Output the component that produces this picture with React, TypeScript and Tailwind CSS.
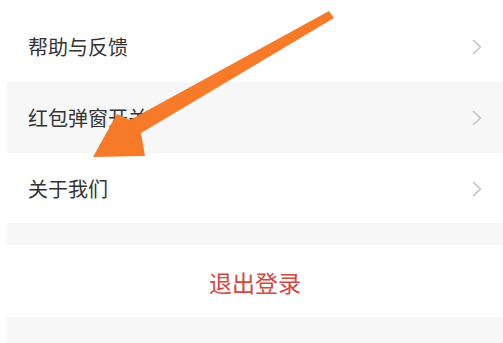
const font = { fontFamily: '"Noto Sans CJK SC", "Noto Sans", sans-serif' };

function Chevron() {
  return (
    <svg width="10" height="16" viewBox="0 0 10 16" fill="none">
      <polyline points="1.5,1.5 8.5,8 1.5,14.5" stroke="#c2c2c2" strokeWidth="1.6" strokeLinecap="round" strokeLinejoin="round" />
    </svg>
  );
}

function Row({ label, gray, className }: { label: string; gray?: boolean; className: string }) {
  return (
    <div className={`flex items-center justify-between pl-[21px] pr-[21px] ${gray ? 'bg-[#f7f7f7]' : 'bg-white'} ${className}`}>
      <span className="text-[20px] leading-none text-[#333333]">{label}</span>
      <Chevron />
    </div>
  );
}

export default function App() {
  return (
    <div className="relative h-[343px] w-[503px] overflow-hidden bg-white pl-[7px]" style={font}>
      <div className="flex flex-col">
        <Row label="帮助与反馈" className="h-[82px] pt-[12px]" />
        <Row label="红包弹窗开关" gray className="h-[71px]" />
        <Row label="关于我们" className="h-[70px] pt-[2px]" />
        <div className="h-[22px] bg-[#f7f7f7]" />
        <div className="flex h-[72px] items-center justify-center bg-white pt-[2px]">
          <span className="text-[23px] leading-none text-[#d8453b]">退出登录</span>
        </div>
        <div className="h-[26px] bg-[#f7f7f7]" />
      </div>

      <svg className="pointer-events-none absolute left-0 top-0" width="503" height="343" viewBox="0 0 503 343">
        <polygon points="329,11 334,18 141,133 145,156 93,157 117,114 130,120" fill="#f67a28" />
      </svg>
    </div>
  );
}
